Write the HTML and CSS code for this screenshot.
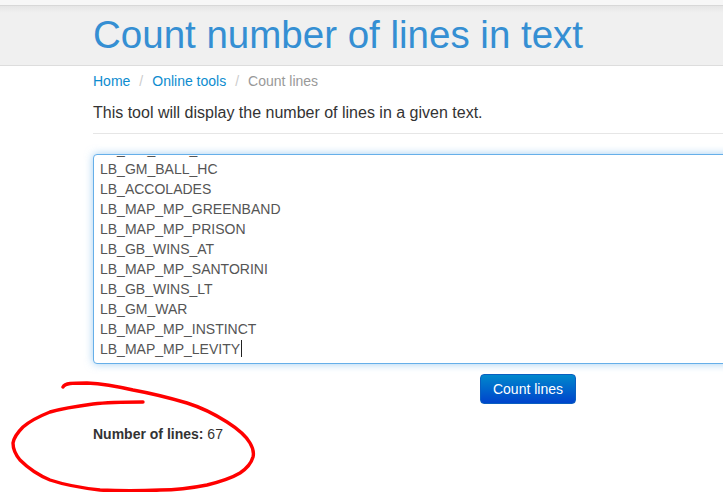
FILE: index.html
```html
<!DOCTYPE html>
<html lang="en">
<head>
  <meta charset="UTF-8" />
  <title>Count number of lines in text</title>
  <link rel="stylesheet" href="styles.css">
</head>
<body>

<div class="top-strip"></div>

<div class="page-header">
  <h1 class="page-title">Count number of lines in text</h1>
</div>

<div class="container">
  <ul class="breadcrumb">
    <li><a href="#">Home</a></li>
    <li class="sep">/</li>
    <li><a href="#">Online tools</a></li>
    <li class="sep">/</li>
    <li class="active">Count lines</li>
  </ul>

  <p class="lead">This tool will display the number of lines in a given text.</p>
  <hr class="divider">

  <div class="tool-form">
    <div class="text-box">
      <div class="text-line">LB_GM_BALL_TB</div>
      <div class="text-line">LB_GM_BALL_HC</div>
      <div class="text-line">LB_ACCOLADES</div>
      <div class="text-line">LB_MAP_MP_GREENBAND</div>
      <div class="text-line">LB_MAP_MP_PRISON</div>
      <div class="text-line">LB_GB_WINS_AT</div>
      <div class="text-line">LB_MAP_MP_SANTORINI</div>
      <div class="text-line">LB_GB_WINS_LT</div>
      <div class="text-line">LB_GM_WAR</div>
      <div class="text-line">LB_MAP_MP_INSTINCT</div>
      <div class="text-line">LB_MAP_MP_LEVITY<span class="caret"></span></div>
    </div>
    <div class="form-actions">
      <button class="btn-count" type="button">Count lines</button>
    </div>
  </div>

  <p class="result"><strong>Number of lines:</strong> 67</p>
</div>

<!-- circulo vermelho desenhado por cima -->
<svg class="scribble" width="723" height="492" viewBox="0 0 723 492">
  <path d="M63 387 C65 383 72 383 87 383 C105 384 120 387 133 390 C155 394 170 398 187 403 C203 408 216 415 227 422 C238 429 246 436 250 443 C253 448 254 453 253 457 C251 464 246 469 240 473 C230 479 219 482 207 485 C192 488 176 490 160 490 C140 491 120 491 100 490 C82 488 65 485 50 480 C38 475 28 468 20 460 C15 454 13 449 13 443 C14 437 18 432 23 427 C31 420 40 416 50 412 C64 408 78 406 93 404 C110 402 126 402 143 402" />
</svg>

</body>
</html>
```

FILE: styles.css
```css
html, body {
  height: 100%;
}

body {
  margin: 0;
  overflow: hidden;
  position: relative;
  background-color: white;
  font-family: "Liberation Sans", Arial, sans-serif;
  font-size: 14px;
  color: #333;
}

.top-strip {
  height: 5px;
  background-color: #f7f7f7;
  border-bottom: 1px solid #d8d8d8;
}

.page-header {
  height: 59px;
  padding-left: 93px;
  background-color: #f0f0f0;
  border-bottom: 1px solid #ddd;
  background-image: linear-gradient(#e6e6e6, #f0f0f0 7px);
}

.page-title {
  margin: 0;
  font-size: 38.5px;
  font-weight: normal;
  line-height: 57px;
  color: #358fd3;
  white-space: nowrap;
}

.container {
  width: 870px;
  margin-left: 93px;
}

.breadcrumb {
  display: flex;
  gap: 9px;
  margin: 0;
  padding: 5px 0 0;
  list-style: none;
  line-height: 20px;
}

.breadcrumb a {
  color: #0d8ccf;
  text-decoration: none;
}

.breadcrumb .sep {
  color: #ccc;
}

.breadcrumb .active {
  color: #999;
}

.lead {
  margin: 11px 0 0;
  font-size: 16px;
  line-height: 22px;
}

.divider {
  margin: 9px 0 20px;
  border: 0;
  border-top: 1px solid #e6e6e6;
}

.text-box {
  box-sizing: border-box;
  height: 210px;
  padding: 4px 6px;
  display: flex;
  flex-direction: column;
  justify-content: flex-end;
  overflow: hidden;
  border: 1px solid #66afe9;
  border-radius: 4px;
  box-shadow: 0 0 8px rgba(102, 175, 233, 0.6);
  color: #555;
  background-color: white;
}

.text-line {
  flex: none;
  height: 20px;
  line-height: 20px;
}

.caret {
  display: inline-block;
  width: 1px;
  height: 17px;
  margin-left: 1px;
  vertical-align: -3px;
  background-color: #222;
}

.form-actions {
  display: flex;
  justify-content: center;
  margin-top: 10px;
}

.btn-count {
  width: 96px;
  height: 30px;
  padding: 0;
  border: 1px solid #0a5fc0;
  border-radius: 4px;
  background-image: linear-gradient(#0088cc, #0044cc);
  color: white;
  font-family: inherit;
  font-size: 14px;
  cursor: pointer;
}

.result {
  margin: 20px 0 0;
  line-height: 20px;
}

.scribble {
  position: absolute;
  top: 0;
  left: 0;
  pointer-events: none;
}

.scribble path {
  fill: none;
  stroke: #f00;
  stroke-width: 3.4;
  stroke-linecap: round;
}
```
